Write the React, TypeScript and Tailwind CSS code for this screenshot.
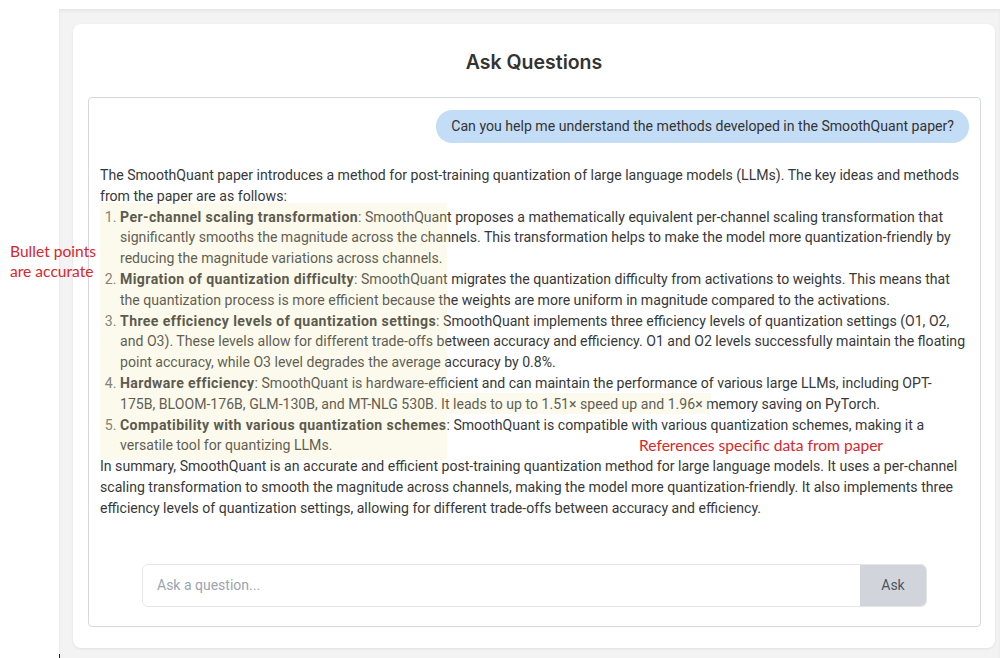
import { useState } from 'react';

const items = [
  {
    title: 'Per-channel scaling transformation',
    body: 'SmoothQuant proposes a mathematically equivalent per-channel scaling transformation that significantly smooths the magnitude across the channels. This transformation helps to make the model more quantization-friendly by reducing the magnitude variations across channels.',
  },
  {
    title: 'Migration of quantization difficulty',
    body: 'SmoothQuant migrates the quantization difficulty from activations to weights. This means that the quantization process is more efficient because the weights are more uniform in magnitude compared to the activations.',
  },
  {
    title: 'Three efficiency levels of quantization settings',
    body: 'SmoothQuant implements three efficiency levels of quantization settings (O1, O2, and O3). These levels allow for different trade-offs between accuracy and efficiency. O1 and O2 levels successfully maintain the floating point accuracy, while O3 level degrades the average accuracy by 0.8%.',
  },
  {
    title: 'Hardware efficiency',
    body: 'SmoothQuant is hardware-efficient and can maintain the performance of various large LLMs, including OPT-175B, BLOOM-176B, GLM-130B, and MT-NLG 530B. It leads to up to 1.51× speed up and 1.96× memory saving on PyTorch.',
  },
  {
    title: 'Compatibility with various quantization schemes',
    body: 'SmoothQuant is compatible with various quantization schemes, making it a versatile tool for quantizing LLMs.',
  },
];

export default function App() {
  const [question, setQuestion] = useState('');

  return (
    <div className="relative w-[1000px] h-[658px] bg-white overflow-hidden font-['Roboto',sans-serif] text-[#333]">
      {/* page backdrop */}
      <div className="ml-[59px] mt-[9px] h-[649px] bg-[#f3f3f3] shadow-[inset_0_2px_3px_rgba(0,0,0,0.06)] pl-[14px] pt-[15px] pr-[5px]">
        <div className="h-[624px] bg-white rounded-lg shadow-[0_1px_3px_rgba(0,0,0,0.08)] flex flex-col">
          <h2 className="h-[73px] pt-[24px] text-center font-['Inter',sans-serif] text-[19.5px] leading-[28px] font-semibold text-[#333]">
            Ask Questions
          </h2>

          <div className="ml-[15px] mr-[14px] h-[530px] border border-[#d5d8de] rounded flex flex-col">
            <div className="flex-1 pl-[11px] pr-[14px] pt-[12px]">
              <div className="flex justify-end -mr-[3px]">
                <div className="bg-[#c4ddf6] rounded-2xl px-[15px] h-[33px] flex items-center text-[14.1px] text-[#333]">
                  Can you help me understand the methods developed in the SmoothQuant paper?
                </div>
              </div>

              <div className="mt-[22px] text-[14.1px] leading-[20.8px] text-[#383838]">
                <p>
                  The SmoothQuant paper introduces a method for post-training quantization of large language models
                  (LLMs). The key ideas and methods from the paper are as follows:
                </p>
                <ol className="list-decimal pl-[20px] marker:text-[#666]">
                  {items.map((item) => (
                    <li key={item.title}>
                      <strong className="font-bold tracking-[0.4px] text-[#333]">{item.title}</strong>: {item.body}
                    </li>
                  ))}
                </ol>
                <p>
                  In summary, SmoothQuant is an accurate and efficient post-training quantization method for large
                  language models. It uses a per-channel scaling transformation to smooth the magnitude across channels,
                  making the model more quantization-friendly. It also implements three efficiency levels of quantization
                  settings, allowing for different trade-offs between accuracy and efficiency.
                </p>
              </div>
            </div>

            <div className="flex justify-center pb-[19px]">
              <div className="w-[785px] h-[43px] flex border border-[#e3e5e9] rounded-md overflow-hidden">
                <input
                  value={question}
                  onChange={(e) => setQuestion(e.target.value)}
                  placeholder="Ask a question..."
                  className="flex-1 px-[14px] text-[14px] text-[#333] placeholder:text-[#9ca3af] outline-none bg-white"
                />
                <button className="w-[66px] bg-[#d1d5db] text-[14px] text-[#4b5563]">Ask</button>
              </div>
            </div>
          </div>
        </div>
      </div>

      {/* reviewer highlight over the list */}
      <div className="absolute left-[100px] top-[203px] w-[347px] h-[257px] bg-[rgba(240,234,175,0.22)] pointer-events-none" />
      <div className="absolute left-[447px] top-[393px] w-[264px] h-[21px] bg-[rgba(240,234,175,0.22)] pointer-events-none" />

      {/* reviewer notes */}
      <div className="absolute left-[10px] top-[241px] font-['Lato',sans-serif] text-[15.6px] leading-[20px] text-[#d9262c]">
        Bullet points
        <br />
        are accurate
      </div>
      <div className="absolute left-[639px] top-[435px] font-['Lato',sans-serif] text-[15.6px] leading-[20px] text-[#d9262c]">
        References specific data from paper
      </div>

      <span className="absolute left-[59px] top-[654px] w-px h-[4px] bg-[#222]" />
    </div>
  );
}
